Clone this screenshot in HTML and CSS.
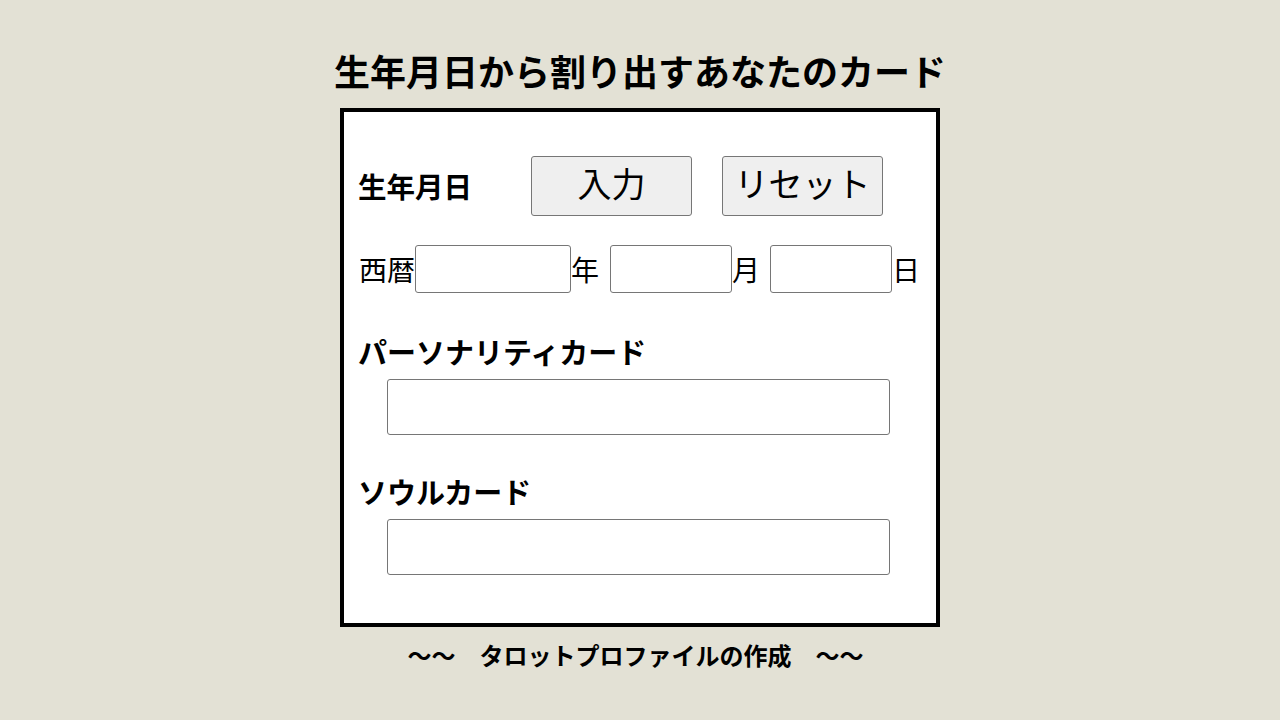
FILE: index.html
```html
<!DOCTYPE html>
<html lang="ja">
<head>
<meta charset="utf-8">
<title>タロットプロファイル</title>
<link rel="stylesheet" href="styles.css">
</head>
<body>
<h1 class="title">生年月日から割り出すあなたのカード</h1>
<main class="card">
  <div class="row-head">
    <span class="label">生年月日</span>
    <button class="btn" type="button">入力</button>
    <button class="btn" type="button">リセット</button>
  </div>
  <div class="row-date">
    <span class="unit">西暦</span><input class="in in-year" type="text"><span class="unit">年</span><input class="in in-md gap" type="text"><span class="unit">月</span><input class="in in-md gap" type="text"><span class="unit">日</span>
  </div>
  <h2 class="section">パーソナリティカード</h2>
  <input class="in result" type="text">
  <h2 class="section second">ソウルカード</h2>
  <input class="in result" type="text">
</main>
<p class="footer">～～　タロットプロファイルの作成　～～</p>
</body>
</html>
```
FILE: styles.css
```css
* { box-sizing: border-box; }
html, body { margin: 0; padding: 0; }
body {
  background: #e3e1d5;
  color: #000;
  font-family: "Noto Sans CJK JP", "Noto Sans", sans-serif;
  display: flex;
  flex-direction: column;
  align-items: center;
}
.title {
  margin: 43px 0 11px;
  font-size: 36px;
  line-height: 54px;
  font-weight: 700;
  text-align: center;
}
.card {
  width: 600px;
  height: 519px;
  background: #fff;
  border: 4px solid #000;
  padding: 44px 15px 0 14px;
  display: flex;
  flex-direction: column;
  align-items: flex-start;
}
.row-head {
  display: flex;
  align-items: center;
  height: 60px;
}
.label {
  width: 173px;
  font-size: 28.5px;
  font-weight: 700;
  line-height: 40px;
  padding-top: 0;
}
.btn {
  width: 161px;
  height: 60px;
  margin: 0 30px 0 0;
  padding: 0 0 6px;
  background: #efefef;
  border: 1px solid #767676;
  border-radius: 3px;
  font-family: "Noto Sans CJK JP", sans-serif;
  font-size: 34px;
  color: #000;
  line-height: 1;
}
.row-date {
  display: flex;
  align-items: center;
  margin-top: 29px;
  height: 48px;
  margin-left: 1px;
}
.unit {
  font-size: 28px;
  line-height: 46px;
  width: 28px;
  white-space: nowrap;
}
.unit:first-child { width: 56px; }
.in {
  border: 1px solid #767676;
  border-radius: 3px;
  background: #fff;
  padding: 0 4px;
  font-size: 20px;
  font-family: "Noto Sans CJK JP", sans-serif;
  margin: 0;
}
.in-year { width: 156px; height: 48px; }
.in-md { width: 122px; height: 48px; }
.gap { margin-left: 11px; }
.row-date .in-md:nth-of-type(3) { margin-left: 10px; }
.section {
  margin: 37px 0 7px;
  font-size: 29px;
  font-weight: 700;
  line-height: 42px;
  height: 42px;
}
.section.second { margin-top: 35px; }
.result {
  width: 503px;
  height: 56px;
  margin-left: 29px;
}
.footer {
  margin: 11px 0 0;
  padding-right: 9px;
  font-size: 24px;
  font-weight: 700;
  line-height: 34px;
  text-align: center;
}
```
